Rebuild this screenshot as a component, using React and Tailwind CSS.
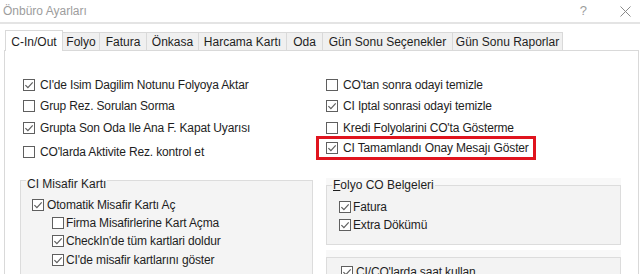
import React from 'react';

// Windows-style "Önbüro Ayarları" dialog, C-In/Out tab

const tabs = [
  { label: 'Folyo', w: 'w-[37px]' },
  { label: 'Fatura', w: 'w-[47px]' },
  { label: 'Önkasa', w: 'w-[52px]' },
  { label: 'Harcama Kartı', w: 'w-[88px]' },
  { label: 'Oda', w: 'w-[36px]' },
  { label: 'Gün Sonu Seçenekler', w: 'w-[130px]' },
  { label: 'Gün Sonu Raporlar', w: 'w-[110px]' },
];

function Box({ checked }) {
  return (
    <span className="flex h-[12px] w-[12px] shrink-0 items-center justify-center border border-[#5f5f5f] bg-white">
      {checked && (
        <svg width="10" height="10" viewBox="0 0 10 10">
          <path d="M1.4 5.1 L3.9 7.6 L8.7 2.3" fill="none" stroke="#5f5f5f" strokeWidth="1.2" />
        </svg>
      )}
    </span>
  );
}

function Check({ label, checked, gap = 'gap-[5px]', className = '' }) {
  return (
    <div className={`flex h-[18px] items-center ${gap} ${className}`}>
      <Box checked={checked} />
      <span className="whitespace-nowrap tracking-[-0.15px]">{label}</span>
    </div>
  );
}

export default function App() {
  return (
    <div className="flex h-[274px] w-[640px] flex-col overflow-hidden bg-white font-['Liberation_Sans',Arial,sans-serif] text-[12px] text-[#1e1e1e]">
      {/* title bar */}
      <div className="flex h-[22px] shrink-0 items-center justify-between pl-[3px] pr-[9px] text-[#9d9d9d]">
        <span>Önbüro Ayarları</span>
        <div className="flex items-center gap-[33px]">
          <span className="text-[13px]">?</span>
          <svg width="11" height="11" viewBox="0 0 11 11">
            <path d="M0.5 0.5 L10.5 10.5 M10.5 0.5 L0.5 10.5" stroke="#8a8a8a" strokeWidth="1" />
          </svg>
        </div>
      </div>
      <div className="h-[2px] shrink-0 bg-[#e4e4e4]" />

      {/* tabs */}
      <div className="mt-[6px] flex shrink-0 items-end pl-[5px]">
        <div className="relative z-10 -mb-px flex h-[21px] w-[58px] items-start justify-center border border-b-0 border-[#d9d9d9] bg-white pt-[2px]">
          C-In/Out
        </div>
        {tabs.map((t) => (
          <div
            key={t.label}
            className={`flex h-[18px] ${t.w} items-center justify-center border border-l-0 border-b-0 border-[#d9d9d9] bg-[#f0f0f0] whitespace-nowrap`}
          >
            {t.label}
          </div>
        ))}
      </div>

      {/* tab panel */}
      <div className="ml-[4px] w-[635px] flex-1 border border-[#d9d9d9] bg-white pl-[15px] pt-[25px]">
        <div className="flex">
          <div className="w-[296px] pl-[3px]">
            <Check checked label="CI'de Isim Dagilim Notunu Folyoya Aktar" />
            <Check className="mt-[3px]" label="Grup Rez. Sorulan Sorma" />
            <Check className="mt-[4px]" checked label="Grupta Son Oda Ile Ana F. Kapat Uyarısı" />
            <Check className="mt-[6px]" label="CO'larda Aktivite Rez. kontrol et" />
          </div>
          <div className="flex-1">
            <Check className="pl-[10px]" label="CO'tan sonra odayi temizle" />
            <Check className="mt-[3px] pl-[10px]" checked label="CI Iptal sonrasi odayi temizle" />
            <Check className="mt-[4px] pl-[10px]" label="Kredi Folyolarini CO'ta Gösterme" />
            <div className="mt-[-1px] w-[220px] border-[3px] border-[#e0141e] pl-[7px]">
              <Check checked label="CI Tamamlandı Onay Mesajı Göster" />
            </div>
          </div>
        </div>

        <div className="mt-[12px] flex items-start gap-[13px]">
          {/* CI Misafir Kartı */}
          <fieldset className="h-[120px] w-[293px] border border-[#dcdcdc] bg-[#f4f4f4]">
            <legend className="relative top-[4px] ml-[5px] px-[1px] leading-[14px]">CI Misafir Kartı</legend>
            <div className="pl-[11px] pt-[9px]">
              <Check checked gap="gap-[3px]" label="Otomatik Misafir Kartı Aç" />
              <div className="pl-[20px]">
                <Check gap="gap-[2px]" className="h-[17px]" label="Firma Misafirlerine Kart Açma" />
                <Check checked gap="gap-[2px]" className="h-[17px]" label="CheckIn'de tüm kartlari doldur" />
                <Check checked gap="gap-[2px]" className="mt-px" label="CI'de misafir kartlarını göster" />
              </div>
            </div>
          </fieldset>

          <div className="mt-[5px] w-[295px]">
            <div className="bg-[#f8f8f8]">
              <fieldset className="border border-[#dcdcdc] bg-[#f3f3f3]">
                <legend className="ml-[5px] px-[1px] leading-[14px]">
                  <span className="underline">F</span>olyo CO Belgeleri
                </legend>
                <div className="pb-[10px] pl-[12px] pt-[6px]">
                  <Check checked gap="gap-[2px]" label="Fatura" />
                  <Check checked gap="gap-[2px]" label="Extra Dökümü" />
                </div>
              </fieldset>
            </div>
            <div className="mt-[5px] bg-[#f8f8f8] pt-[7px]">
              <div className="h-[40px] border border-[#dcdcdc] bg-[#f3f3f3] pl-[14px] pt-[5px]">
                <Check checked gap="gap-[3px]" label="CI/CO'larda saat kullan" />
              </div>
            </div>
          </div>
        </div>
      </div>
    </div>
  );
}
